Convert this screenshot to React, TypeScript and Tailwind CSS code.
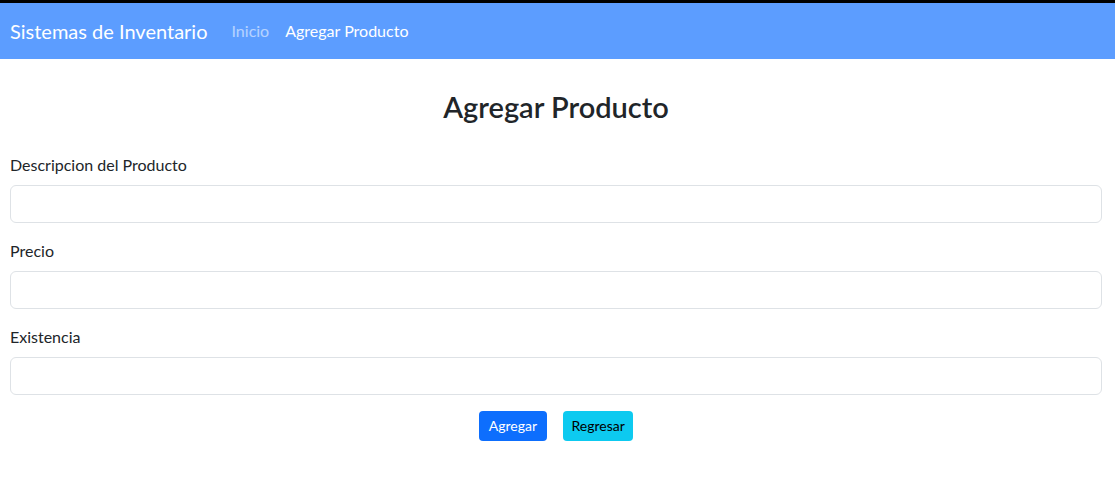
import React from 'react';

const font = { fontFamily: 'Lato, "Open Sans", "Liberation Sans", sans-serif' };

function Field({ label }: { label: string }) {
  return (
    <div className="mb-4">
      <label className="block mb-2 text-base leading-6 text-[#212529]">{label}</label>
      <input
        type="text"
        className="block w-full h-[38px] rounded-[6px] border border-[#dee2e6] bg-white px-3 outline-none"
      />
    </div>
  );
}

export default function App() {
  return (
    <div className="min-h-[479px] bg-white" style={font}>
      <nav className="border-t-[3px] border-black bg-[#5c9dff] h-[59px] flex items-center px-[10px]">
        <span className="text-[20px] text-white mr-6">Sistemas de Inventario</span>
        <a className="text-base text-white/55 mr-4">Inicio</a>
        <a className="text-base text-white">Agregar Producto</a>
      </nav>
      <div className="pl-[10px] pr-[13px]">
        <h3 className="text-center text-[29px] font-semibold leading-[34px] text-[#212529] mt-[31px] mb-[29px]">
          Agregar Producto
        </h3>
        <form>
          <Field label="Descripcion del Producto" />
          <Field label="Precio" />
          <Field label="Existencia" />
          <div className="flex justify-center gap-4">
            <button type="button" className="h-[30px] px-[10px] rounded-[4px] bg-[#0d6efd] text-white text-sm">
              Agregar
            </button>
            <button type="button" className="h-[30px] px-[8.5px] rounded-[4px] bg-[#0dcaf0] text-black text-sm">
              Regresar
            </button>
          </div>
        </form>
      </div>
    </div>
  );
}
